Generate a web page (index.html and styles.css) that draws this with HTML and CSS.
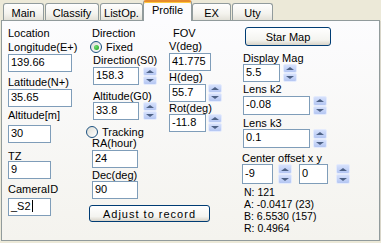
FILE: index.html
```html
<!DOCTYPE html>
<html lang="en">
<head>
    <meta charset="UTF-8">
    <title>Profile</title>
    <link rel="stylesheet" href="styles.css">
</head>
<body>
    <div class="tabs">
        <div class="tab t-main">Main</div>
        <div class="tab t-classify">Classify</div>
        <div class="tab t-listop">ListOp.</div>
        <div class="tab active">Profile</div>
        <div class="tab t-ex">EX</div>
        <div class="tab t-uty">Uty</div>
    </div>

    <div class="panel">
        <!-- location -->
        <div class="col col-loc">
            <div class="lbl">Location</div>
            <div class="lbl">Longitude(E+)</div>
            <div class="box w64">139.66</div>
            <div class="lbl">Latitude(N+)</div>
            <div class="box w64">35.65</div>
            <div class="lbl">Altitude[m]</div>
            <div class="box w43">30</div>
            <div class="lbl">TZ</div>
            <div class="box w43">9</div>
            <div class="lbl">CameraID</div>
            <div class="box w43">_S2<span class="caret"></span></div>
        </div>

        <!-- direction -->
        <div class="col col-dir">
            <div class="lbl ml6">Direction</div>
            <div class="radio ml4"><span class="dot on"></span>Fixed</div>
            <div class="lbl ml7">Direction(S0)</div>
            <div class="row ml7">
                <div class="box w46">158.3</div>
                <div class="spin g4"><span class="up"></span><span class="down"></span></div>
            </div>
            <div class="lbl ml7">Altitude(G0)</div>
            <div class="row ml7">
                <div class="box w46">33.8</div>
                <div class="spin g4"><span class="up"></span><span class="down"></span></div>
            </div>
            <div class="radio"><span class="dot"></span>Tracking</div>
            <div class="lbl ml6">RA(hour)</div>
            <div class="box w46 ml6">24</div>
            <div class="lbl ml6">Dec(deg)</div>
            <div class="box w46 ml6">90</div>
            <button class="btn btn-adjust">Adjust to record</button>
        </div>

        <!-- field of view -->
        <div class="col col-fov">
            <div class="lbl ml5">FOV</div>
            <div class="lbl ml1">V(deg)</div>
            <div class="box w42 ml1">41.775</div>
            <div class="lbl ml1">H(deg)</div>
            <div class="row ml1">
                <div class="box w37">55.7</div>
                <div class="spin g2"><span class="up"></span><span class="down"></span></div>
            </div>
            <div class="lbl ml1">Rot(deg)</div>
            <div class="row ml1">
                <div class="box w37">-11.8</div>
                <div class="spin g2"><span class="up"></span><span class="down"></span></div>
            </div>
        </div>

        <!-- star map / lens -->
        <div class="col col-map">
            <button class="btn btn-map">Star Map</button>
            <div class="lbl ml2">Display Mag</div>
            <div class="row ml2">
                <div class="box w37">5.5</div>
                <div class="spin g3"><span class="up"></span><span class="down"></span></div>
            </div>
            <div class="lbl ml2">Lens k2</div>
            <div class="row ml2">
                <div class="box tall w67">-0.08</div>
                <div class="spin g3"><span class="up"></span><span class="down"></span></div>
            </div>
            <div class="lbl ml2">Lens k3</div>
            <div class="row ml2">
                <div class="box tall w67">0.1</div>
                <div class="spin g3"><span class="up"></span><span class="down"></span></div>
            </div>
            <div class="lbl ml1">Center offset x y</div>
            <div class="row ml1">
                <div class="box taller w31">-9</div>
                <div class="spin g5"><span class="up"></span><span class="down"></span></div>
                <div class="box taller w29 g7">0</div>
                <div class="spin g8"><span class="up"></span><span class="down"></span></div>
            </div>
            <div class="stats">
                <div>N: 121</div>
                <div>A: -0.0417 (23)</div>
                <div>B: 6.5530 (157)</div>
                <div>R: 0.4964</div>
            </div>
        </div>
    </div>
</body>
</html>
```

FILE: styles.css
```css
body {
    margin: 0;
    background-color: #ece9d8;
    font-family: "Liberation Sans", Arial, sans-serif;
    font-size: 11px;
    color: #000;
}

/* tabs */
.tabs {
    display: flex;
    align-items: flex-end;
    height: 20px;
    padding-left: 3px;
}
.tab {
    box-sizing: border-box;
    height: 17px;
    padding-top: 3px;
    line-height: 12px;
    text-align: center;
    border: 1px solid #919b9c;
    border-bottom: none;
    border-radius: 3px 3px 0 0;
    background: linear-gradient(#fefefe, #f4f3ee 60%, #e3e1d8);
}
.t-main { width: 41px; margin-right: 1px; }
.t-classify { width: 54px; margin-right: 1px; }
.t-listop { width: 43px; }
.t-ex { width: 39px; margin-right: 1px; }
.t-uty { width: 41px; }
.tab.active {
    position: relative;
    z-index: 1;
    width: 49px;
    height: 21px;
    margin-bottom: -1px;
    padding-top: 2px;
    border-top: 2px solid #e68b2c;
    box-shadow: inset 0 1px 0 #ffc83c;
    background: #fcfcfe;
}

/* panel */
.panel {
    box-sizing: border-box;
    display: flex;
    width: 379px;
    height: 221px;
    margin-left: 1px;
    padding-top: 6px;
    border: 1px solid #919b9c;
    background: linear-gradient(#fcfcfe, #f4f3ee);
    box-shadow: 1px 1px 0 #d8d5c8;
}
.col {
    display: grid;
    align-items: start;
    align-content: start;
}
.col-loc {
    width: 78px;
    margin-left: 6px;
    grid-template-rows: 14px 13px 22px 13px 20px 16px 25px 11px 22px 15px 18px;
}
.col-dir {
    width: 82px;
    grid-template-rows: 14px 13px 13px 23px 12px 24px 11px 13px 19px 12px 24px 17px;
}
.col-fov {
    width: 73px;
    grid-template-rows: 13px 13px 18px 13px 18px 12px 17px;
}
.col-map {
    flex: 1;
    grid-template-rows: 25px 12px 19px 13px 21px 12px 23px 12px 22px auto;
}

.lbl {
    line-height: 12px;
    white-space: nowrap;
}
.ml1 { margin-left: 1px; }
.ml2 { margin-left: 2px; }
.ml4 { margin-left: 4px; }
.ml5 { margin-left: 5px; }
.ml6 { margin-left: 6px; }
.ml7 { margin-left: 7px; }

.row {
    display: flex;
    align-items: flex-start;
}

/* text boxes */
.box {
    box-sizing: border-box;
    height: 18px;
    padding-left: 2px;
    line-height: 14px;
    border: 1px solid #7f9db9;
    background-color: #fff;
    white-space: nowrap;
}
.box.tall { height: 19px; line-height: 15px; }
.box.taller { height: 20px; line-height: 16px; }
.w29 { width: 29px; }
.w31 { width: 31px; }
.w37 { width: 37px; }
.w42 { width: 42px; }
.w43 { width: 43px; }
.w46 { width: 46px; }
.w64 { width: 64px; }
.w67 { width: 67px; }
.caret {
    display: inline-block;
    width: 1px;
    height: 12px;
    margin-left: 1px;
    vertical-align: -2px;
    background-color: #000;
}

/* up/down buttons */
.spin {
    display: flex;
    flex-direction: column;
    align-self: stretch;
    width: 14px;
}
.g2 { margin-left: 2px; }
.g3 { margin-left: 3px; }
.g4 { margin-left: 4px; }
.g5 { margin-left: 5px; }
.g7 { margin-left: 7px; }
.g8 { margin-left: 8px; }
.spin span {
    flex: 1;
    display: flex;
    align-items: center;
    justify-content: center;
    border: 1px solid #e4ebfd;
    border-radius: 2px;
    background: linear-gradient(#d6e1fc, #b4c6f2);
}
.spin .up::after,
.spin .down::after {
    content: "";
    border-left: 4px solid transparent;
    border-right: 4px solid transparent;
}
.spin .up::after { border-bottom: 3px solid #4d6185; }
.spin .down::after { border-top: 3px solid #4d6185; }

/* radio buttons */
.radio {
    display: flex;
    align-items: center;
    gap: 4px;
    line-height: 12px;
}
.dot {
    box-sizing: border-box;
    display: flex;
    align-items: center;
    justify-content: center;
    width: 12px;
    height: 12px;
    border: 1px solid #1c5180;
    border-radius: 50%;
    background: linear-gradient(135deg, #dcdcd5, #fff);
}
.dot.on::after {
    content: "";
    width: 5px;
    height: 5px;
    border-radius: 50%;
    background: radial-gradient(circle at 35% 35%, #6fdc6f, #1f9e1f);
}

/* push buttons */
.btn {
    box-sizing: border-box;
    padding: 0;
    font-family: inherit;
    font-size: 11px;
    color: #000;
    border: 1px solid #003c74;
    border-radius: 3px;
    background: linear-gradient(#fff, #f4f4f0 70%, #d8d3c8);
}
.btn-map {
    width: 86px;
    height: 19px;
    margin-left: 4px;
}
.btn-adjust {
    width: 121px;
    height: 17px;
    margin-left: 3px;
    letter-spacing: 1px;
}

.stats {
    margin-left: 3px;
    font-size: 10.5px;
    line-height: 12px;
}
```
